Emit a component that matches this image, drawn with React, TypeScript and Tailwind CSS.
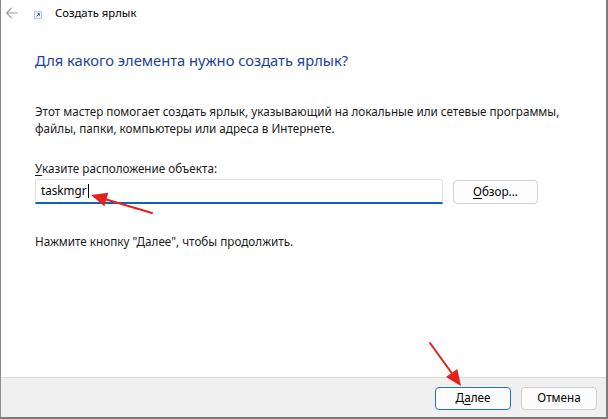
import React from "react";

const font = { fontFamily: '"Segoe UI", "Noto Sans", "Open Sans", sans-serif' };

function BackArrow() {
  return (
    <svg width="14" height="12" viewBox="0 0 14 12" fill="none" stroke="#a0a0a0" strokeWidth="1.2">
      <path d="M13 6H1.5M6.5 1L1.5 6l5 5" />
    </svg>
  );
}

function ShortcutIcon() {
  return (
    <svg width="8" height="8" viewBox="0 0 8 8">
      <rect x="0.5" y="0.5" width="7" height="7" fill="#eef3fb" stroke="#b9c7de" />
      <path d="M2.5 5.5L5.5 2.5M3.5 2.5h2v2" stroke="#2a6fd0" strokeWidth="1" fill="none" />
    </svg>
  );
}

function RedArrow({ x1, y1, x2, y2 }: { x1: number; y1: number; x2: number; y2: number }) {
  const ang = Math.atan2(y2 - y1, x2 - x1);
  const len = 16;
  const w = 7;
  const bx = x2 - Math.cos(ang) * len;
  const by = y2 - Math.sin(ang) * len;
  const px = -Math.sin(ang) * w;
  const py = Math.cos(ang) * w;
  return (
    <g>
      <line x1={x1} y1={y1} x2={bx} y2={by} stroke="#e8201c" strokeWidth="2" strokeLinecap="round" />
      <polygon points={`${x2},${y2} ${bx + px},${by + py} ${bx - px},${by - py}`} fill="#e8201c" />
    </g>
  );
}

export default function App() {
  return (
    <div className="relative w-[608px] h-[419px] overflow-hidden bg-white text-[11.7px] text-[#1a1a1a]" style={font}>
      <div className="flex flex-col h-full border-l border-l-[#8a8a8a] border-r-2 border-r-[#7c7c7c] border-b-2 border-b-[#7c7c7c]">
        {/* header */}
        <div className="flex items-center h-[26px] pl-[4px]">
          <BackArrow />
          <div className="ml-[15px] mt-[4px]">
            <ShortcutIcon />
          </div>
          <span className="ml-[13px] text-[11.3px] text-black">Создать ярлык</span>
        </div>

        {/* body */}
        <div className="flex-1 pl-[34px] whitespace-nowrap">
          <h1 className="mt-[24px] text-[14.7px] leading-[20px] text-[#1c3f9c]">Для какого элемента нужно создать ярлык?</h1>
          <p className="mt-[33px] leading-[17px]">
            Этот мастер помогает создать ярлык, указывающий на локальные или сетевые программы,
            <br />
            файлы, папки, компьютеры или адреса в Интернете.
          </p>
          <div className="mt-[23px] leading-[16px]">
            <span className="underline underline-offset-2">У</span>казите расположение объекта:
          </div>
          <div className="mt-[3px] flex items-center gap-[10px]">
            <div className="w-[408px] h-[25px] border border-[#e0e0e0] border-b-2 border-b-[#0a64c0] rounded-t-[3px] flex items-center pl-[5px] text-black">
              taskmgr<span className="w-px h-[14px] bg-black ml-px" />
            </div>
            <button className="w-[85px] h-[24px] border border-[#d0d0d0] rounded-[4px] bg-[#fdfdfd] text-black">
              <span className="underline underline-offset-2">О</span>бзор...
            </button>
          </div>
          <p className="mt-[29px]">Нажмите кнопку "Далее", чтобы продолжить.</p>
        </div>

        {/* footer */}
        <div className="h-[40px] bg-[#f0f0f0] border-t border-t-[#dcdcdc] flex items-center justify-end gap-[10px] pr-[9px] pt-[1px]">
          <button className="w-[76px] h-[23px] border border-[#1a74d4] rounded-[4px] bg-[#fcfcfc] text-black">
            Д<span className="underline underline-offset-2">а</span>лее
          </button>
          <button className="w-[76px] h-[23px] border border-[#d0d0d0] rounded-[4px] bg-[#fcfcfc] text-black">
            Отмена
          </button>
        </div>
      </div>

      <svg className="absolute inset-0 pointer-events-none" width="608" height="419">
        <RedArrow x1={152} y1={213} x2={91} y2={195} />
        <RedArrow x1={430} y1={343} x2={461} y2={386} />
      </svg>
    </div>
  );
}
